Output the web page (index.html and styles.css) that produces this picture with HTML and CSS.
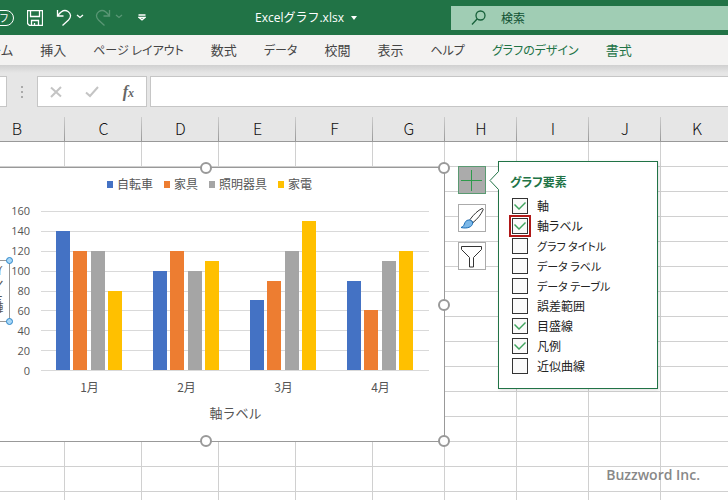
FILE: index.html
```html
<!DOCTYPE html>
<html lang="ja">
<head>
<meta charset="utf-8">
<title>Excelグラフ.xlsx</title>
<link rel="stylesheet" href="styles.css">
</head>
<body>
<header class="titlebar">
  <div class="quick">
    <button class="autosave" aria-pressed="false">オフ</button>
    <button class="save" aria-label="上書き保存"><svg width="16" height="16" viewBox="0 0 16 16"><path d="M.5.5h15v15H2.5l-2-2zM3.5.5v6h9v-6M4.500 15.500v-5h7v5M7.500 15v-2"/></svg></button>
    <button class="undo" aria-label="元に戻す"><svg width="28" height="18" viewBox="0 0 28 18"><path d="M1.500 1v6h6M1.500 7C5 2 9 .5 12 2.500S15.500 8 12.500 11L6.500 16.500"/><path d="M21 6l3 2.500L27 6"/></svg></button>
    <button class="redo" aria-label="やり直し"><svg width="28" height="18" viewBox="0 0 28 18"><path d="M14.500 1v6h-6M14.500 7C11 2 7 .5 4 2.500S.5 8 3.500 11l6 5.500"/><path d="M21 6l3 2.500L27 6"/></svg></button>
    <button class="more" aria-label="クイック アクセスのカスタマイズ"><svg width="8" height="7" viewBox="0 0 8 7"><path d="M.5 1h7M1 3.500L4 6l3-2.500z"/></svg></button>
  </div>
  <button class="filename">Excelグラフ.xlsx<svg width="6" height="4" viewBox="0 0 6 4"><path d="M0 0h6L3 4z"/></svg></button>
  <label class="search">
    <svg width="16" height="16" viewBox="0 0 16 16"><circle cx="9.500" cy="5.500" r="4.500"/><path d="M6.300 8.700L1 14.500"/></svg>
    <input type="text" placeholder="検索" aria-label="検索">
  </label>
</header>
<nav class="tabs">
  <a class="home" href="#">ホーム</a>
  <a href="#">挿入</a>
  <a class="kana" href="#">ページ レイアウト</a>
  <a href="#">数式</a>
  <a class="kana" href="#">データ</a>
  <a href="#">校閲</a>
  <a href="#">表示</a>
  <a class="kana" href="#">ヘルプ</a>
  <a class="kana contextual" href="#">グラフのデザイン</a>
  <a class="contextual" href="#">書式</a>
</nav>
<div class="formula">
  <div class="namebox"></div>
  <svg class="grip" width="2" height="12" viewBox="0 0 2 12"><path d="M0 0h2v2H0zM0 5h2v2H0zM0 10h2v2H0z"/></svg>
  <div class="formula-buttons">
    <button aria-label="キャンセル"><svg width="12" height="12" viewBox="0 0 12 12"><path d="M1 1.500l10 9M11 1L1 11"/></svg></button>
    <button aria-label="入力"><svg width="14" height="12" viewBox="0 0 14 12"><path d="M1 6.500l4 3.500 8-9"/></svg></button>
    <button class="fx" aria-label="関数の挿入">f<sub>x</sub></button>
  </div>
  <input class="formula-input" type="text" aria-label="数式バー">
</div>
<main class="sheet">
  <table>
    <colgroup><col class="first"><col class="wide"><col class="wide"><col class="wide"><col class="wide"><col class="std"><col class="std"><col class="std"><col class="std"><col></colgroup>
    <thead><tr><th class="b">B</th><th>C</th><th>D</th><th>E</th><th>F</th><th>G</th><th>H</th><th>I</th><th>J</th><th class="last">K</th></tr></thead>
    <tbody>
      <tr><td></td><td></td><td></td><td></td><td></td><td></td><td></td><td></td><td></td><td></td></tr>
      <tr><td></td><td></td><td></td><td></td><td></td><td></td><td></td><td></td><td></td><td></td></tr>
      <tr><td></td><td></td><td></td><td></td><td></td><td></td><td></td><td></td><td></td><td></td></tr>
      <tr><td></td><td></td><td></td><td></td><td></td><td></td><td></td><td></td><td></td><td></td></tr>
      <tr><td></td><td></td><td></td><td></td><td></td><td></td><td></td><td></td><td></td><td></td></tr>
      <tr><td></td><td></td><td></td><td></td><td></td><td></td><td></td><td></td><td></td><td></td></tr>
      <tr><td></td><td></td><td></td><td></td><td></td><td></td><td></td><td></td><td></td><td></td></tr>
      <tr><td></td><td></td><td></td><td></td><td></td><td></td><td></td><td></td><td></td><td></td></tr>
      <tr><td></td><td></td><td></td><td></td><td></td><td></td><td></td><td></td><td></td><td></td></tr>
      <tr><td></td><td></td><td></td><td></td><td></td><td></td><td></td><td></td><td></td><td></td></tr>
      <tr><td></td><td></td><td></td><td></td><td></td><td></td><td></td><td></td><td></td><td></td></tr>
      <tr><td></td><td></td><td></td><td></td><td></td><td></td><td></td><td></td><td></td><td></td></tr>
      <tr><td></td><td></td><td></td><td></td><td></td><td></td><td></td><td></td><td></td><td></td></tr>
      <tr><td></td><td></td><td></td><td></td><td></td><td></td><td></td><td></td><td></td><td></td></tr>
      <tr><td></td><td></td><td></td><td></td><td></td><td></td><td></td><td></td><td></td><td></td></tr>
    </tbody>
  </table>

  <section class="chart">
    <div class="legend">
      <span class="key blue">自転車</span><span class="key orange">家具</span><span class="key gray">照明器具</span><span class="key yellow">家電</span>
    </div>
    <div class="body">
      <div class="scale"><span>160</span><span>140</span><span>120</span><span>100</span><span>80</span><span>60</span><span>40</span><span>20</span><span>0</span></div>
      <div class="plot">
        <div class="lines"><i></i><i></i><i></i><i></i><i></i><i></i><i></i><i></i></div>
        <div class="group"><b class="blue" style="height:87.5%"></b><b class="orange" style="height:75%"></b><b class="gray" style="height:75%"></b><b class="yellow" style="height:50%"></b></div>
        <div class="group"><b class="blue" style="height:62.5%"></b><b class="orange" style="height:75%"></b><b class="gray" style="height:62.5%"></b><b class="yellow" style="height:68.75%"></b></div>
        <div class="group"><b class="blue" style="height:43.75%"></b><b class="orange" style="height:56.25%"></b><b class="gray" style="height:75%"></b><b class="yellow" style="height:93.75%"></b></div>
        <div class="group"><b class="blue" style="height:56.25%"></b><b class="orange" style="height:37.5%"></b><b class="gray" style="height:68.75%"></b><b class="yellow" style="height:75%"></b></div>
      </div>
    </div>
    <div class="months"><span>1月</span><span>2月</span><span>3月</span><span>4月</span></div>
    <div class="axis-title">軸ラベル</div>
    <div class="value-title"><span>軸ラベル</span><i class="dot top"></i><i class="dot bottom"></i></div>
    <i class="handle n"></i><i class="handle ne"></i><i class="handle e"></i><i class="handle se"></i><i class="handle s"></i>
  </section>

  <div class="chart-tools">
    <button class="active" aria-label="グラフ要素"><svg width="26" height="26" viewBox="0 0 26 26"><path d="M12.500 3v21M2 13.500h21" stroke="#2f9a4c" fill="none"/></svg></button>
    <button aria-label="グラフ スタイル"><svg width="26" height="26" viewBox="0 0 26 26"><path d="M11 14.500C15 9 19 5.500 23 3.500c1 0 1.500.5 1 1.500C22 9.500 18.500 14 14 17.500z" fill="#fff" stroke="#333"/><path d="M10.500 15c2 .3 3 1.500 3.200 3C13.500 22 8 24 2 22.500c3-1 3-3 4-5 .8-1.700 2.500-2.700 4.500-2.500z" fill="#7cb8e8" stroke="#1d6fb8"/></svg></button>
    <button aria-label="グラフ フィルター"><svg width="26" height="26" viewBox="0 0 26 26"><path d="M2.500 3.500h20v3l-8 8v9.500h-4v-9.500l-8-8z" fill="#fff" stroke="#333"/></svg></button>
  </div>

  <fieldset class="elements">
    <svg class="pointer" width="10" height="20" viewBox="0 0 10 20"><path d="M10 0L1 9.500 10 19z" fill="#fff"/><path d="M9.500 .5L1 9.500l8.500 9" fill="none" stroke="#217346"/></svg>
    <legend>グラフ要素</legend>
    <label><input type="checkbox" checked>軸</label>
    <label class="marked"><input type="checkbox" checked>軸ラベル</label>
    <label class="kana"><input type="checkbox">グラフ タイトル</label>
    <label class="kana"><input type="checkbox">データ ラベル</label>
    <label class="kana"><input type="checkbox">データ テーブル</label>
    <label><input type="checkbox">誤差範囲</label>
    <label><input type="checkbox" checked>目盛線</label>
    <label><input type="checkbox" checked>凡例</label>
    <label><input type="checkbox">近似曲線</label>
  </fieldset>
  <div class="credit">Buzzword Inc.</div>
</main>
</body>
</html>
```
FILE: styles.css
```css
* { box-sizing: border-box; }
body {
  margin: 0;
  height: 100vh;
  display: flex;
  flex-direction: column;
  overflow: hidden;
  background: #e6e6e6;
  color: #444;
  font: 13px/20px "Noto Sans CJK JP", sans-serif;
  font-feature-settings: "palt";
}
button, input { font: inherit; font-feature-settings: inherit; color: inherit; border: 0; padding: 0; margin: 0; background: none; }
button svg { display: block; }

/* Title bar */
.titlebar { flex: none; display: grid; grid-template-columns: 255px 196px 1fr; align-items: center; height: 35px; background: #217346; color: #fff; }
.quick { display: flex; align-items: center; }
.quick svg { fill: none; stroke: #fff; stroke-width: 1.3; }
.autosave { width: 34px; height: 16px; margin-left: -20px; padding-right: 5px; border: 1px solid #fff; border-radius: 8px; font-size: 10px; line-height: 14px; text-align: right; }
.save { margin-left: 13px; }
.undo { margin-left: 13px; }
.redo { margin-left: 11px; opacity: .25; }
.more { margin-left: 15px; }
.filename { display: flex; align-items: center; gap: 7px; font: 12px/20px "Open Sans", "Noto Sans CJK JP", sans-serif; white-space: nowrap; }
.filename svg { fill: #fff; }
.search { display: flex; align-items: center; gap: 14px; height: 24px; padding-left: 20px; background: #a0cdb4; color: #0f5132; }
.search svg { flex: none; fill: none; stroke: #17603a; stroke-width: 1.3; }
.search input { flex: 1; min-width: 0; font-size: 12px; }
.search input::placeholder { color: #0f5132; opacity: 1; }

/* Ribbon tabs */
.tabs { flex: none; display: flex; align-items: center; gap: 27px; height: 30px; background: #f3f2f1; white-space: nowrap; }
.tabs a { color: #444; text-decoration: none; }
.tabs .kana { font-size: 12px; }
.tabs .contextual { color: #217346; }
.tabs .home { margin-left: -24px; }

/* Formula bar */
.formula { flex: none; display: flex; align-items: center; height: 52px; padding-top: 1px; background: linear-gradient(#d0d0d0, #e6e6e6 8px); }
.namebox, .formula-buttons, .formula-input { height: 31px; background: #fff; border: 1px solid #c6c6c6; }
.namebox { width: 7px; border-left: 0; }
.grip { margin: 0 14px; fill: #aaa; }
.formula-buttons { display: flex; align-items: center; width: 110px; padding: 0 12px; justify-content: space-between; }
.formula-buttons svg { fill: none; stroke: #c4c4c4; stroke-width: 2; }
.fx { font: italic bold 16px/20px "Liberation Serif", serif; color: #666; }
.fx sub { font-size: 12px; line-height: 1; vertical-align: 0; }
.formula-input { flex: 1; min-width: 0; margin-left: 3px; border-right: 0; }

/* Worksheet */
.sheet { flex: 1; position: relative; overflow: hidden; }
table { width: 100%; table-layout: fixed; border-collapse: separate; border-spacing: 0; background: #fff; }
.first { width: 65px; }
.wide { width: 77px; }
.std { width: 72px; }
th { height: 25px; padding: 0; background: linear-gradient(#ccc, #999) right / 1px 100% no-repeat #e6e6e6; border-bottom: 1px solid #999; color: #111; font: 300 16px/22px "Noto Sans CJK JP", sans-serif; vertical-align: top; }
th.b { padding-right: 31px; }
th.last { padding-left: 5px; background: #e6e6e6; }
td { height: 25px; padding: 0; border-right: 1px solid #d0d0d0; border-bottom: 1px solid #d0d0d0; }
td:last-child { border-right: 0; }

/* Chart object floating over the cells */
.chart { position: absolute; left: -33px; top: 50px; width: 478px; padding: 7px 15px 18px 33px; background: #fff; border: 1px solid #999; color: #555; font-size: 12px; font-feature-settings: normal; }
.legend { display: flex; gap: 11px; padding-left: 106px; line-height: 18px; white-space: nowrap; }
.key { display: flex; align-items: center; gap: 4px; }
.key::before { content: ""; width: 6px; height: 7px; background: var(--c); }
.blue { --c: #4472c4; }
.orange { --c: #ed7d31; }
.gray { --c: #a5a5a5; }
.yellow { --c: #ffc000; }
.body { display: flex; height: 176px; margin-top: 8px; }
.scale { width: 29px; margin-right: 11px; text-align: right; font: 11px/20px "Open Sans", sans-serif; }
.scale span { display: block; }
.plot { flex: 1; position: relative; display: grid; grid-template-columns: repeat(4, 1fr); height: 160px; margin: 10px 0 6px; border-bottom: 1px solid #d9d9d9; }
.lines { position: absolute; inset: 0; display: grid; grid-template-rows: repeat(8, 1fr); }
.lines i { border-top: 1px solid #d9d9d9; }
.group { position: relative; display: flex; align-items: flex-end; justify-content: space-between; padding: 0 16px 0 15px; }
.group b { width: 14px; background: var(--c); }
.months { display: grid; grid-template-columns: repeat(4, 1fr); padding-left: 40px; text-align: center; }
.axis-title { margin-top: 6px; padding-left: 41px; text-align: center; font-size: 13px; }
.value-title { position: absolute; left: 11px; top: 92px; width: 31px; height: 62px; padding: 4px 0 4px 8px; border: 1px solid #999; }
.value-title span { display: block; writing-mode: vertical-rl; transform: rotate(180deg); }
.dot { position: absolute; right: -4px; width: 7px; height: 7px; border: 1px solid #2e86c8; border-radius: 50%; background: #a8d8f8; }
.dot.top { top: -4px; }
.dot.bottom { bottom: -4px; }
.handle { position: absolute; width: 12px; height: 12px; border: 2px solid #999; border-radius: 50%; background: #fff; transform: translate(-50%, -50%); }
.n { left: 50%; top: 0; }
.ne { left: 100%; top: 0; }
.e { left: 100%; top: 50%; }
.se { left: 100%; top: 100%; }
.s { left: 50%; top: 100%; }

/* Floating chart buttons */
.chart-tools { position: absolute; left: 458px; top: 49px; display: grid; gap: 10px; }
.chart-tools button { width: 28px; height: 28px; border: 1px solid #ababab; background: #fff; }
.chart-tools .active { border-color: #5a9a72; background: #ababab; }

/* Chart elements flyout */
.elements { position: absolute; left: 498px; top: 44px; width: 160px; margin: 0; padding: 10px 0 12px 11px; border: 1px solid #217346; background: #fff; color: #222; box-shadow: 1px 1px 3px #0002; }
.elements legend { float: left; width: 100%; padding: 0; margin-bottom: 4px; color: #217346; font-size: 12px; font-weight: 700; }
.elements label { clear: both; display: flex; align-items: center; gap: 9px; height: 20px; padding-left: 2px; font-size: 12px; white-space: nowrap; }
.elements .kana { font-size: 11px; }
.elements input { appearance: none; flex: none; width: 16px; height: 16px; border: 1px solid #333; background: #fafafa; }
.elements input:checked::after { content: ""; display: block; width: 14px; height: 14px; background: #3fa35d; clip-path: polygon(1px 6px, 2px 5px, 6px 9px, 12px 3px, 13px 4px, 6px 11px); }
.marked input { outline: 2px solid #b01818; outline-offset: 1px; }
.pointer { position: absolute; left: -10px; top: 9px; }

.credit { position: absolute; right: 28px; bottom: 15px; color: #888; font: 600 14px/20px "Open Sans", sans-serif; }
```
